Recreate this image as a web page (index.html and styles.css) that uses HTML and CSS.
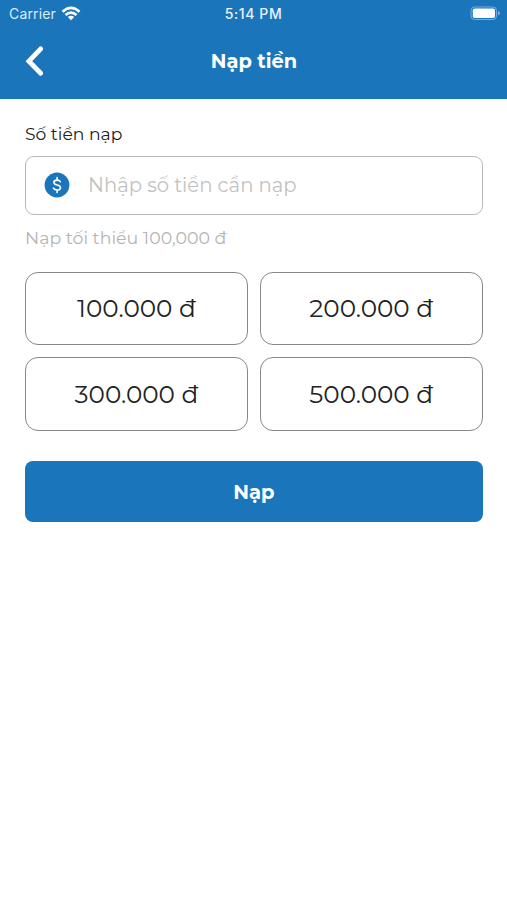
FILE: index.html
```html
<!DOCTYPE html>
<html lang="vi">
<head>
<meta charset="utf-8">
<meta name="viewport" content="width=device-width, initial-scale=1">
<title>Nạp tiền</title>
<link rel="stylesheet" href="styles.css">
</head>
<body>
<header class="header">
  <div class="status">
    <div class="carrier"><span class="carrier-name">Carrier</span>
      <svg class="wifi" width="20" height="16" viewBox="0 0 20 16" fill="none" stroke="#fff" stroke-width="2.6"><path d="M1.5 5.8Q10-1.9 18.5 5.8M4.5 9Q10 4.1 15.5 9"/><path d="M6.8 11.1Q10 8.5 13.2 11.1L10 14.3Z" fill="#fff" stroke="none"/></svg>
    </div>
    <time class="clock">5:14 PM</time>
    <svg class="battery" width="31" height="15" viewBox="0 0 31 15"><rect x="1" y="1" width="25.5" height="12.5" rx="3.5" fill="none" stroke="#76ade0" stroke-width="1"/><rect x="2.8" y="2.5" width="22.2" height="9.5" rx="1.8" fill="#fff"/><path d="M28 5Q30 5.5 30 7.2Q30 9 28 9.5Z" fill="#76ade0"/></svg>
  </div>
  <div class="nav">
    <button class="back" aria-label="Quay lại"><svg width="20" height="32" viewBox="0 0 20 32" fill="none" stroke="#fff" stroke-width="4.8" stroke-linecap="round" stroke-linejoin="miter"><path d="M15.7 3.8L3.9 16.2L15.7 28.2"/></svg></button>
    <h1 class="title">Nạp tiền</h1>
  </div>
</header>
<main class="content">
  <label class="label" for="amount">Số tiền nạp</label>
  <div class="field">
    <svg class="coin" width="26" height="26" viewBox="0 0 26 26"><circle cx="13" cy="13" r="12.4" fill="#1b75bb"/><path d="M16.3 9.7C15.6 8.5 14.4 8.1 13 8.1C11.1 8.1 9.9 9.1 9.9 10.5C9.9 14 16.5 12.1 16.5 15.7C16.5 17.2 15.1 18 13.2 18C11.5 18 10.1 17.4 9.4 16.2M13.1 5.6V8.1M13.1 18V20.5" fill="none" stroke="#fff" stroke-width="1.6" stroke-linecap="round"/></svg>
    <input class="input" id="amount" type="text" placeholder="Nhập số tiền cần nạp">
  </div>
  <p class="hint">Nạp tối thiểu 100,000 đ</p>
  <div class="amounts">
    <button class="amount">100.000 đ</button>
    <button class="amount">200.000 đ</button>
    <button class="amount">300.000 đ</button>
    <button class="amount">500.000 đ</button>
  </div>
  <button class="submit">Nạp</button>
</main>
</body>
</html>
```
FILE: styles.css
```css
* { box-sizing: border-box; }
body { margin: 0; background: #fff; color: #222; font-family: Montserrat, Inter, sans-serif; }
button { margin: 0; padding: 0; border: 0; background: none; color: inherit; font: inherit; }
.header { height: 98.5px; background: #1b75bb; color: #fff; }
.status { height: 27px; display: grid; grid-template-columns: 1fr auto 1fr; align-items: center; padding: 0 6px 0 9px; font-family: Inter, sans-serif; }
.carrier { display: flex; align-items: center; gap: 5px; font-size: 14px; color: #dcecfa; }
.carrier-name { letter-spacing: .15px; }
.clock { margin-right: 3px; font-size: 14px; font-weight: 500; letter-spacing: .6px; color: #eaf4fd; }
.battery { justify-self: end; }
.nav { height: 68px; display: grid; grid-template-columns: 1fr auto 1fr; align-items: center; padding: 0 24px 0 25px; }
.back { width: 20px; height: 32px; }
.back svg { display: block; }
.title { margin: 0; font-size: 19.4px; font-weight: 700; line-height: 24px; }
.content { padding: 24.5px 24.5px 0 25px; }
.label { display: block; height: 22px; line-height: 22px; font-size: 17.2px; }
.field { height: 59px; margin-top: 11px; padding: 0 19px 1px; display: flex; align-items: center; gap: 18px; border: 1.5px solid #b9b9b9; border-radius: 9px; }
.coin { flex: none; margin-left: -1px; }
.input { flex: 1; min-width: 0; height: 30px; padding: 0; border: 0; outline: 0; background: none; font: 400 19.6px/30px Montserrat, Inter, sans-serif; color: #222; }
.input::placeholder { color: #c2c2c2; opacity: 1; }
.hint { margin: 11px 0 0; height: 24px; line-height: 24px; font-size: 17.4px; color: #b4b4b4; }
.amounts { margin-top: 22px; display: grid; grid-template-columns: 1fr 1fr; gap: 12px; }
.amount { height: 73.4px; padding-bottom: .8px; border: 1.5px solid #888; border-radius: 13px; font-size: 24.7px; font-weight: 450; }
.submit { display: block; width: 100%; height: 61px; margin-top: 30.2px; padding-top: 1px; border-radius: 8px; background: #1b75bb; color: #fff; font-size: 19.5px; font-weight: 700; }
```
